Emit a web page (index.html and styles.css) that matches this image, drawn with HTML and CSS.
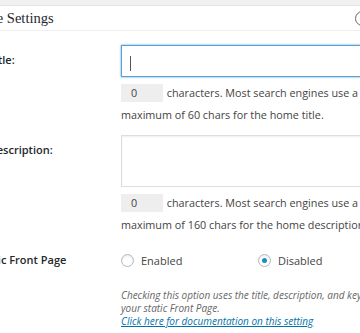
FILE: index.html
```html
<!DOCTYPE html>
<html lang="en">

<head>
    <meta charset="UTF-8">
    <meta name="viewport" content="width=device-width, initial-scale=1.0">
    <title>Home Page Settings</title>

    <link rel="stylesheet" href="styles.css">
</head>

<body>
    <div class="postbox">
        <div class="hndle">
            <h3>Home Page Settings</h3>
            <span class="toggle"></span>
        </div>

        <div class="inside">
            <div class="row">
                <label class="label">Home Title:</label>
                <div class="field">
                    <div class="input focused"><span class="caret"></span></div>
                    <p class="count">
                        <span class="counter">0</span> characters. Most search engines use a maximum of 60 chars for the home title.
                    </p>
                </div>
            </div>

            <div class="row">
                <label class="label">Home Description:</label>
                <div class="field">
                    <div class="input textarea"></div>
                    <p class="count">
                        <span class="counter">0</span> characters. Most search engines use a maximum of 160 chars for the home description.
                    </p>
                </div>
            </div>

            <div class="row radios">
                <label class="label">Use Static Front Page</label>
                <div class="field">
                    <div class="options">
                        <span class="option"><i class="radio"></i>Enabled</span>
                        <span class="option"><i class="radio checked"></i>Disabled</span>
                    </div>
                    <p class="help">
                        Checking this option uses the title, description, and keywords you set on your static Front Page.<br>
                        <a href="#">Click here for documentation on this setting</a>
                    </p>
                </div>
            </div>
        </div>
    </div>
</body>

</html>
```

FILE: styles.css
```css
* {
    margin: 0;
    padding: 0;
    box-sizing: border-box;
}

body {
    background: #f1f1f1;
    font-family: "Open Sans", "Liberation Sans", sans-serif;
    font-size: 11px;
    color: #444;
    overflow: hidden;
}

.postbox {
    margin: 5px 0 0 -73px;
    width: 459px;
    height: 330px;
    background: #fff;
    border: 1px solid #e5e5e5;
    border-bottom: none;
}

.hndle {
    height: 25px;
    padding: 0 12px 0 8px;
    border-bottom: 1px solid #eee;
    display: flex;
    align-items: center;
    justify-content: space-between;
}

.hndle h3 {
    font-family: "Liberation Serif", "DejaVu Serif", serif;
    font-weight: normal;
    font-size: 14.5px;
    color: #23282d;
}

/* 折叠按钮 只露出左边一点 */
.toggle {
    width: 15px;
    height: 15px;
    border: 1.5px solid #666;
    border-radius: 50%;
    margin-right: 3px;
}

.inside {
    padding: 14px 12px 0 26px;
}

.row {
    display: grid;
    grid-template-columns: 167px 1fr;
}

.label {
    font-weight: 600;
    color: #23282d;
    padding-top: 6px;
    line-height: 18px;
}

.input {
    height: 32px;
    border: 1px solid #ddd;
    box-shadow: inset 0 1px 2px rgba(0, 0, 0, .07);
    padding: 8px 8px;
}

.input.focused {
    border-color: #5b9dd9;
    box-shadow: 0 0 2px rgba(30, 140, 190, .8);
}

.caret {
    display: block;
    width: 1px;
    height: 15px;
    margin-top: 2px;
    background: #555;
}

.input.textarea {
    height: 52px;
}

.count {
    width: 275px;
    margin: 5px 0 9px;
    line-height: 22px;
    font-size: 10.8px;
}

.counter {
    display: inline-block;
    width: 42px;
    height: 18px;
    line-height: 18px;
    padding-left: 10px;
    background: #eee;
    margin-right: 1px;
    vertical-align: middle;
    position: relative;
    top: -1px;
}

.radios {
    margin-top: 5px;
}

.radios .label {
    padding-top: 0;
    line-height: 20px;
}

.options {
    display: flex;
    height: 20px;
    align-items: center;
}

.option {
    width: 137px;
    display: flex;
    align-items: center;
}

.radio {
    width: 13px;
    height: 13px;
    border: 1px solid #b4b9be;
    border-radius: 50%;
    box-shadow: inset 0 1px 2px rgba(0, 0, 0, .1);
    margin-right: 7px;
    display: flex;
    align-items: center;
    justify-content: center;
}

.radio.checked::before {
    content: "";
    width: 5px;
    height: 5px;
    border-radius: 50%;
    background: #1e8cbe;
}

.help {
    margin-top: 19px;
    font-style: italic;
    font-size: 10px;
    line-height: 13px;
    color: #666;
    width: 318px;
}

.help a {
    color: #0073aa;
}
```
